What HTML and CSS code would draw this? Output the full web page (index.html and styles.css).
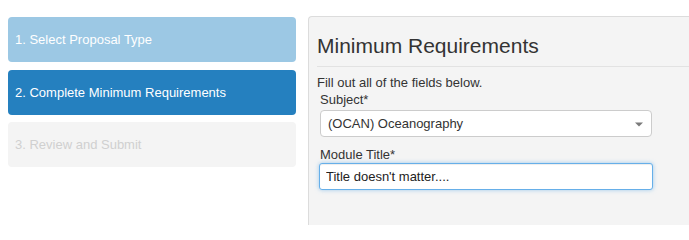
FILE: index.html
```html
<!DOCTYPE html>
<html>
<head>
<meta charset="utf-8">
<link rel="stylesheet" href="styles.css">
</head>
<body>
<div class="layout">
  <nav class="steps">
    <div class="step step-done">1. Select Proposal Type</div>
    <div class="step step-active">2. Complete Minimum Requirements</div>
    <div class="step step-disabled">3. Review and Submit</div>
  </nav>
  <section class="panel">
    <h3 class="panel-title">Minimum Requirements</h3>
    <p class="intro">Fill out all of the fields below.</p>
    <label class="field-label">Subject*</label>
    <div class="select">
      <span>(OCAN) Oceanography</span>
      <svg class="caret" width="8" height="5" viewBox="0 0 8 5"><path d="M0 0.5 L8 0.5 L4 4.5 Z" fill="#7a7a7a"/></svg>
    </div>
    <label class="field-label field-label-2">Module Title*</label>
    <input class="text-input" type="text" value="Title doesn't matter....">
  </section>
</div>
</body>
</html>
```
FILE: styles.css
```css
html, body {
  margin: 0;
  padding: 0;
  background: #ffffff;
  overflow: hidden;
}
body {
  font-family: "Liberation Sans", Arial, sans-serif;
  font-size: 13px;
  color: #333333;
  width: 689px;
  height: 225px;
}
.layout {
  display: flex;
  align-items: stretch;
  box-sizing: border-box;
  height: 225px;
  padding: 16px 0 0 8px;
}
.steps {
  width: 288px;
  flex: none;
  align-self: flex-start;
  margin-top: 1px;
  display: flex;
  flex-direction: column;
  gap: 7.5px;
}
.step {
  height: 45px;
  box-sizing: border-box;
  border-radius: 4px;
  padding-left: 7px;
  display: flex;
  align-items: center;
  font-size: 13px;
}
.step-done {
  background: #9cc8e4;
  color: #ffffff;
}
.step-active {
  background: #2580bf;
  color: #ffffff;
}
.step-disabled {
  background: #f4f4f4;
  color: #d0d0d0;
}
.panel {
  flex: 1;
  min-width: 0;
  margin-left: 12px;
  box-sizing: border-box;
  background: #f4f4f4;
  border: 1px solid #dcdcdc;
  border-right: none;
  border-bottom: none;
  border-radius: 4px 0 0 0;
  padding: 0 0 0 8px;
}
.panel-title {
  margin: 17px 0 0 0;
  padding-bottom: 8px;
  font-size: 21px;
  line-height: 24px;
  font-weight: normal;
  color: #333333;
  border-bottom: 1px solid #e2e2e2;
}
.intro {
  margin: 7px 0 0 0;
  line-height: 17px;
}
.field-label {
  display: block;
  margin-left: 3px;
  line-height: 17px;
}
.select {
  margin: 2px 0 0 3px;
  width: 332px;
  height: 27px;
  box-sizing: border-box;
  background: #ffffff;
  border: 1px solid #cccccc;
  border-radius: 4px;
  display: flex;
  align-items: center;
  justify-content: space-between;
  padding: 0 8px 0 7px;
  color: #333333;
}
.caret {
  display: block;
  margin-top: 2px;
}
.field-label-2 {
  margin-top: 9px;
}
.text-input {
  display: block;
  margin: 0 0 0 2px;
  width: 334px;
  height: 27px;
  box-sizing: border-box;
  border: 1px solid #66afe9;
  border-radius: 3px;
  box-shadow: inset 0 1px 1px rgba(0,0,0,.075), 0 0 4px rgba(102,175,233,.6);
  padding: 0 6px;
  font-family: "Liberation Sans", Arial, sans-serif;
  font-size: 13px;
  color: #222222;
  background: #ffffff;
  outline: none;
}
```
